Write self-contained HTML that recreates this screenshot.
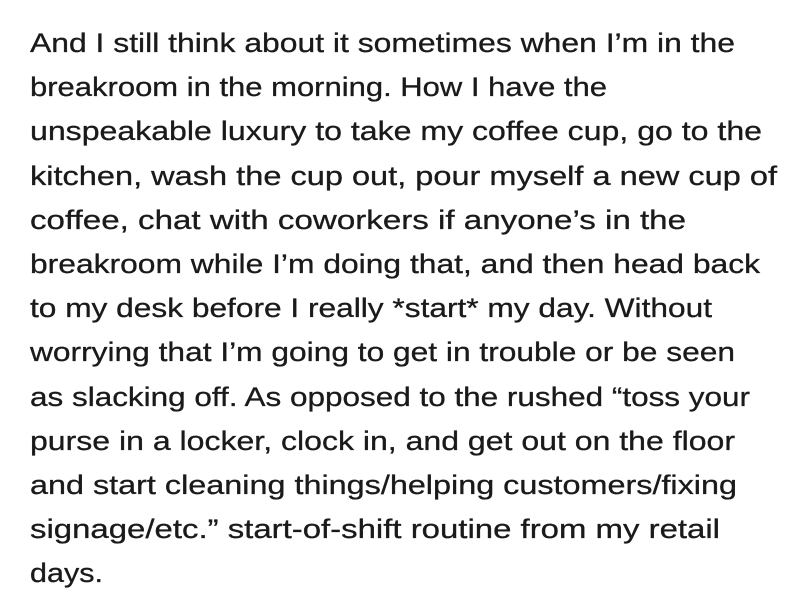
<!DOCTYPE html>
<html><head><meta charset="utf-8"><style>
html,body{margin:0;padding:0;background:#fff;}
svg{display:block;}
text{font-family:"Liberation Sans",sans-serif;font-size:27px;fill:#1a1a1a;stroke:#1a1a1a;stroke-width:0.3px;}
</style></head><body>
<svg width="800" height="601" viewBox="0 0 800 601" xmlns="http://www.w3.org/2000/svg">
<text x="30" y="52" textLength="705" lengthAdjust="spacingAndGlyphs">And I still think about it sometimes when I’m in the</text>
<text x="30" y="96" textLength="577" lengthAdjust="spacingAndGlyphs">breakroom in the morning. How I have the</text>
<text x="30" y="140" textLength="732" lengthAdjust="spacingAndGlyphs">unspeakable luxury to take my coffee cup, go to the</text>
<text x="30" y="185" textLength="747" lengthAdjust="spacingAndGlyphs">kitchen, wash the cup out, pour myself a new cup of</text>
<text x="30" y="229" textLength="656" lengthAdjust="spacingAndGlyphs">coffee, chat with coworkers if anyone’s in the</text>
<text x="30" y="273" textLength="730" lengthAdjust="spacingAndGlyphs">breakroom while I’m doing that, and then head back</text>
<text x="30" y="317" textLength="682" lengthAdjust="spacingAndGlyphs">to my desk before I really *start* my day. Without</text>
<text x="30" y="361" textLength="705" lengthAdjust="spacingAndGlyphs">worrying that I’m going to get in trouble or be seen</text>
<text x="30" y="406" textLength="720" lengthAdjust="spacingAndGlyphs">as slacking off. As opposed to the rushed “toss your</text>
<text x="30" y="450" textLength="705" lengthAdjust="spacingAndGlyphs">purse in a locker, clock in, and get out on the floor</text>
<text x="30" y="494" textLength="707" lengthAdjust="spacingAndGlyphs">and start cleaning things/helping customers/fixing</text>
<text x="30" y="538" textLength="690" lengthAdjust="spacingAndGlyphs">signage/etc.” start-of-shift routine from my retail</text>
<text x="30" y="582" textLength="73" lengthAdjust="spacingAndGlyphs">days.</text>
</svg>
</body></html>
